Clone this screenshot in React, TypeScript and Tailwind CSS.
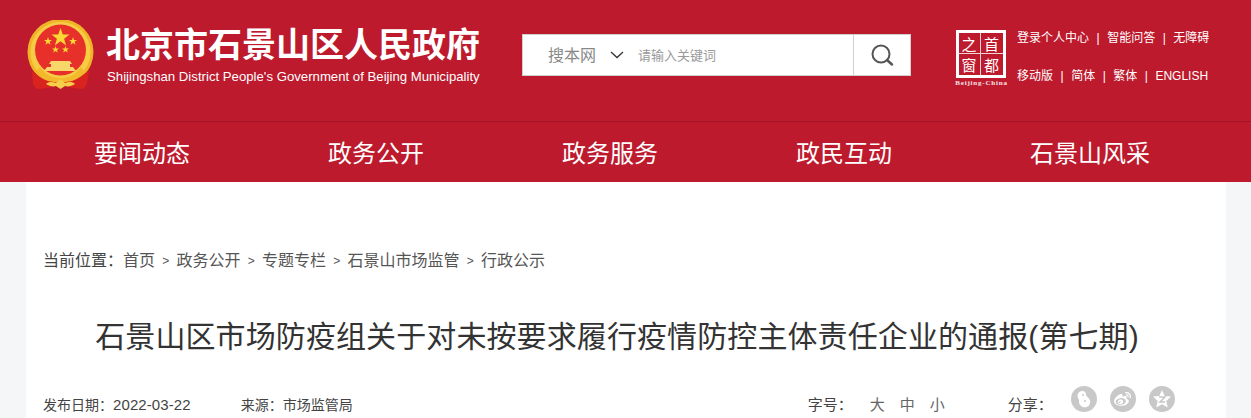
import { FC } from 'react';
import { FaWeibo } from 'react-icons/fa';

const cjk = "font-['Liberation_Sans','Noto_Sans_CJK_SC',sans-serif]";
const navItems = ['要闻动态', '政务公开', '政务服务', '政民互动', '石景山风采'];
const crumbs = ['首页', '政务公开', '专题专栏', '石景山市场监管', '行政公示'];

const Emblem: FC = () => (
    <svg width="68" height="72" viewBox="0 0 68 72" className="shrink-0">
        <circle cx="33.500" cy="32" r="33" fill="#f0b428" />
        <circle cx="33.500" cy="32" r="30" fill="#f7cc45" />
        <circle cx="33.500" cy="30" r="25.500" fill="#e8302a" />
        <polygon
            points="33.500,8 35.800,14.600 42.500,14.600 37.100,18.700 39.100,25.400 33.500,21.300 27.900,25.400 29.900,18.700 24.500,14.600 31.200,14.600"
            fill="#fbd635"
        />
        <polygon points="21,17 22,20 25,20 22.600,21.800 23.500,24.800 21,23 18.500,24.800 19.400,21.800 17,20 20,20" fill="#fbd635" />
        <polygon points="46,17 47,20 50,20 47.600,21.800 48.500,24.800 46,23 43.500,24.800 44.400,21.800 42,20 45,20" fill="#fbd635" />
        <polygon points="28.500,26 29.400,28.500 32,28.500 30,30 30.700,32.500 28.500,31 26.300,32.500 27,30 25,28.500 27.600,28.500" fill="#fbd635" />
        <polygon points="38.500,26 39.400,28.500 42,28.500 40,30 40.700,32.500 38.500,31 36.300,32.500 37,30 35,28.500 37.600,28.500" fill="#fbd635" />
        <path d="M24 41h19l2 3h-2v3h3l3 4H17l3-4h4v-3h-2z" fill="#f9d66a" />
        <path d="M13 47c6 9 14 11 20.500 11S48 56 54 47l3 4c-5 9-14 12-23.500 12S15 60 10 51z" fill="#f2b92c" />
        <path d="M5 51c5 3 9 8 16 10l12 2 12-2c7-2 11-7 17-10l-2 12c-1 4-3 6-7 6l-7-1-7-2-6 1-6-1-7 2-7 1c-4 0-6-2-7-6z" fill="#d9231e" />
        <path d="M19 64c3-3 7-2 10-1l4.500-4 4.500 4c3-1 7-2 10 1-3 2-7 3-10 2l-4.500 3-4.500-3c-3 1-7 0-10-2z" fill="#f6cf48" />
    </svg>
);

const CapitalLogo: FC = () => (
    <div className="shrink-0 w-[53px] flex flex-col items-center">
        <div className="w-[50px] h-[48px] -ml-[2px] border-[3px] border-white grid grid-cols-2 grid-rows-2 bg-[#bd1a2d] text-white text-[15px] leading-none font-['Noto_Sans_CJK_SC',serif]">
            <span className="flex items-center justify-center border-r border-b border-white/80">之</span>
            <span className="flex items-center justify-center border-b border-white/80">首</span>
            <span className="flex items-center justify-center border-r border-white/80">窗</span>
            <span className="flex items-center justify-center">都</span>
        </div>
        <div className="text-white/90 text-[7px] leading-[9px] mt-px font-bold tracking-[0.8px] whitespace-nowrap font-['Liberation_Serif',serif]">
            Beijing-China
        </div>
    </div>
);

const TopLinks: FC<{ items: string[] }> = ({ items }) => (
    <div className="flex items-center text-white text-xs leading-4 whitespace-nowrap">
        {items.map((it, i) => (
            <span key={it} className="flex items-center">
                {i > 0 && <span className="mx-[7.500px]">|</span>}
                {it}
            </span>
        ))}
    </div>
);

const ShareIcon: FC<{ children: React.ReactNode }> = ({ children }) => (
    <span className="w-[26px] h-[26px] rounded-full bg-[#c8c8c8] flex items-center justify-center text-white">
        {children}
    </span>
);

export default function App() {
    return (
        <div className={`h-[418px] overflow-hidden bg-[#f4f6f8] ${cjk}`}>
            <header className="h-[122px] bg-[#bd1a2d] border-b border-[#a01426] flex pl-[27px] pt-[20px]">
                <Emblem />
                <div className="ml-[12px] w-[373px] pt-[5px]">
                    <h1 className="text-[34px] leading-[40px] font-bold text-white whitespace-nowrap -ml-px">
                        北京市石景山区人民政府
                    </h1>
                    <div className="text-[13.200px] leading-4 mt-[4px] text-white whitespace-nowrap">
                        Shijingshan District People's Government of Beijing Municipality
                    </div>
                </div>
                <div className="ml-[42px] mt-[14px] w-[389px] h-[42px] bg-white border border-[#cfcfcf] flex items-center">
                    <span className="ml-[25px] mt-[2px] text-base text-[#888888]">搜本网</span>
                    <svg width="14" height="8" viewBox="0 0 14 8" className="ml-[14px]">
                        <path d="M1 1l6 5.500L13 1" fill="none" stroke="#333333" strokeWidth="1.300" />
                    </svg>
                    <span className="ml-[14px] mt-[2px] text-[13px] text-[#9a9a9a]">请输入关键词</span>
                    <div className="ml-auto w-[57px] h-full border-l border-[#cfcfcf] flex items-center justify-center">
                        <svg width="24" height="24" viewBox="0 0 24 24">
                            <circle cx="11" cy="11" r="8.500" fill="none" stroke="#555555" strokeWidth="2" />
                            <path d="M17 17l5 4.500" stroke="#555555" strokeWidth="2.500" strokeLinecap="round" />
                        </svg>
                    </div>
                </div>
                <div className="ml-[44px] mt-[10px]">
                    <CapitalLogo />
                </div>
                <div className="ml-[9px] mt-[10px] flex flex-col gap-[22px]">
                    <TopLinks items={['登录个人中心', '智能问答', '无障碍']} />
                    <TopLinks items={['移动版', '简体', '繁体', 'ENGLISH']} />
                </div>
            </header>

            <nav className="h-[60px] pt-[3px] bg-[#bd1a2d] flex items-center pl-[94px] gap-[138px] text-white text-2xl whitespace-nowrap">
                {navItems.map((it) => (
                    <span key={it}>{it}</span>
                ))}
            </nav>

            <main className="w-[1200px] ml-[26px] h-[236px] bg-white px-[17px]">
                <div className="pt-[68px] flex items-center text-base leading-[22px] text-[#555555] whitespace-nowrap">
                    <span className="text-[#444444]">当前位置：</span>
                    {crumbs.map((it, i) => (
                        <span key={it} className="flex items-center">
                            {i > 0 && <span className="w-[21.500px] text-center text-xs">&gt;</span>}
                            {it}
                        </span>
                    ))}
                </div>
                <h2 className="mt-[43px] pr-[18px] text-center text-3xl tracking-[0.1px] leading-[44px] font-normal text-[#333333] whitespace-nowrap">
                    石景山区市场防疫组关于对未按要求履行疫情防控主体责任企业的通报(第七期)
                </h2>
                <div className="mt-[33px] flex items-center text-sm leading-[26px] text-[#444444] whitespace-nowrap">
                    <span>
                        发布日期：<span className="text-[15px] tracking-[0.1px]">2022-03-22</span>
                    </span>
                    <span className="ml-[50px]">来源：市场监管局</span>
                    <span className="ml-[455px] text-[15px]">字号：</span>
                    <span className="ml-[17px] flex gap-[15px] text-[15px] text-[#666666]">
                        <span>大</span>
                        <span>中</span>
                        <span>小</span>
                    </span>
                    <span className="ml-[63px] text-[15px]">分享：</span>
                    <span className="ml-[18px] flex gap-[13px] -translate-y-[6px]">
                        <ShareIcon>
                            <svg width="16" height="18" viewBox="0 0 16 18">
                                <path
                                    d="M5.500 1C8 .5 10 2 10 4.500c0 1.500 1 2 2.500 3.500 2 2 2.500 5 .5 7.500-2 2-5.500 2.500-8 .5C3 14.500 3 12.500 3 10.500 3 9 1.500 8 1.500 6 1.500 3.500 3 1.500 5.500 1z"
                                    fill="#ffffff"
                                />
                                <circle cx="7" cy="5" r="1" fill="#c8c8c8" />
                                <circle cx="9" cy="11" r="1" fill="#c8c8c8" />
                            </svg>
                        </ShareIcon>
                        <ShareIcon>
                            <FaWeibo className="text-[17px]" />
                        </ShareIcon>
                        <ShareIcon>
                            <svg width="20" height="20" viewBox="0 0 20 20">
                                <polygon
                                    points="10,1 12.700,7 19,7.600 14.300,12 15.700,18.500 10,15.200 4.300,18.500 5.700,12 1,7.600 7.300,7"
                                    fill="#ffffff"
                                />
                                <path d="M7 8h6l-5 5h5" fill="none" stroke="#c8c8c8" strokeWidth="1.500" />
                            </svg>
                        </ShareIcon>
                    </span>
                </div>
            </main>
        </div>
    );
}
